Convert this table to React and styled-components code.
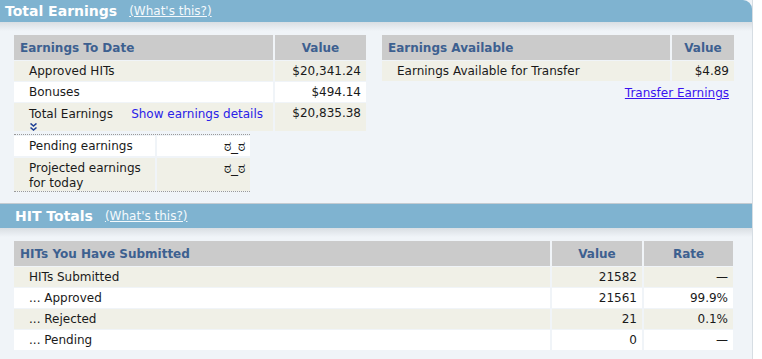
import React from 'react';
import styled, { createGlobalStyle } from 'styled-components';

const GlobalStyle = createGlobalStyle`
    html, body {
        margin: 0;
        padding: 0;
        background: #ffffff;
    }
    body {
        font-family: 'DejaVu Sans', Verdana, sans-serif;
        font-size: 12px;
        color: #1a1a1a;
    }
`;

const Page = styled.div`
    width: 752px;
    border-right: 1px solid #d6dde3;
    background: #f0f4f8;
`;

const Section = styled.section`
    border-top: ${(p) => (p.$divided ? '1px solid #c4cbd1' : 'none')};
`;

const Bar = styled.div`
    display: flex;
    align-items: center;
    gap: 12px;
    height: ${(p) => p.$height}px;
    padding-left: ${(p) => p.$indent}px;
    background: #7fb3d0;
    border-top-right-radius: ${(p) => (p.$rounded ? '9px' : '0')};
`;

const BarTitle = styled.h2`
    margin: 0;
    font-size: 14px;
    font-weight: bold;
    color: #ffffff;
`;

const BarLink = styled.a`
    color: #f4f9fc;
    font-size: 12px;
    text-decoration: underline;
    cursor: pointer;
`;

const Body = styled.div`
    padding: 13px 0 ${(p) => p.$bottom}px 14px;
    background: linear-gradient(#d9dee3 0px, #f0f4f8 9px);
`;

const Columns = styled.div`
    display: flex;
    gap: 16px;
    align-items: flex-start;
`;

const Stack = styled.div`
    display: flex;
    flex-direction: column;
    align-items: ${(p) => p.$align || 'stretch'};
`;

const Grid = styled.div`
    display: grid;
    grid-template-columns: ${(p) => p.$cols};
    column-gap: 2px;
    row-gap: ${(p) => p.$rowGap ?? 1}px;
`;

const HeadCell = styled.div`
    height: 25px;
    display: flex;
    align-items: center;
    justify-content: ${(p) => (p.$center ? 'center' : 'flex-start')};
    padding-left: ${(p) => (p.$center ? 0 : 6)}px;
    background: #cbcbcb;
    color: #3d6090;
    font-weight: bold;
`;

const Cell = styled.div`
    min-height: ${(p) => p.$height || 20}px;
    box-sizing: border-box;
    padding: ${(p) => (p.$top ? '3px' : '0')} 5px 0 15px;
    display: flex;
    align-items: ${(p) => (p.$top ? 'flex-start' : 'center')};
    justify-content: ${(p) => (p.$right ? 'flex-end' : 'flex-start')};
    background: ${(p) => (p.$alt ? '#f0f0e7' : '#ffffff')};
    line-height: 15px;
`;

const TotalCell = styled(Cell)`
    flex-direction: column;
    align-items: stretch;
    justify-content: flex-start;
    padding-top: 4px;
`;

const TotalLine = styled.div`
    display: flex;
    justify-content: space-between;
`;

const DetailsLink = styled.a`
    color: #2a22e8;
    cursor: pointer;
    padding-right: 5px;
`;

const Chevrons = styled.svg`
    width: 7px;
    height: 8px;
    margin: 1px 0 0 1px;
    display: block;
`;

const Dotted = styled(Grid)`
    margin-top: 3px;
    width: 236px;
    border-top: 1px dotted #9a9a9a;
    border-bottom: 1px dotted #9a9a9a;
    padding: 1px 0 0;
`;

const Face = styled.span`
    font-family: 'DejaVu Sans', 'Noto Sans', 'Noto Sans CJK JP', sans-serif;
    font-size: 14px;
    line-height: 15px;
`;

const TransferLink = styled.a`
    margin-top: 5px;
    padding-right: 5px;
    color: #3a12f0;
    text-decoration: underline;
    cursor: pointer;
`;

const earnings = [
    ['Approved HITs', '$20,341.24'],
    ['Bonuses', '$494.14'],
];

const hits = [
    ['HITs Submitted', '21582', '\u2014'],
    ['... Approved', '21561', '99.9%'],
    ['... Rejected', '21', '0.1%'],
    ['... Pending', '0', '\u2014'],
];

const App = () => {
    return (
        <>
            <GlobalStyle />
            <Page>
                <Section>
                    <Bar $height={22} $indent={5} $rounded>
                        <BarTitle>Total Earnings</BarTitle>
                        <BarLink>(What's this?)</BarLink>
                    </Bar>
                    <Body $bottom={11}>
                        <Columns>
                            <Stack>
                                <Grid $cols="259px 91px">
                                    <HeadCell>Earnings To Date</HeadCell>
                                    <HeadCell $center>Value</HeadCell>
                                    {earnings.map(([label, value], i) => (
                                        <React.Fragment key={label}>
                                            <Cell $alt={i % 2 === 0}>{label}</Cell>
                                            <Cell $alt={i % 2 === 0} $right>
                                                {value}
                                            </Cell>
                                        </React.Fragment>
                                    ))}
                                    <TotalCell $alt $height={26}>
                                        <TotalLine>
                                            <span>Total Earnings</span>
                                            <DetailsLink>Show earnings details</DetailsLink>
                                        </TotalLine>
                                        <Chevrons viewBox="0 0 7 8">
                                            <path
                                                d="M0.5 0.5 L3.5 3 L6.5 0.5 M0.5 4.5 L3.5 7 L6.5 4.5"
                                                fill="none"
                                                stroke="#1d3f96"
                                                strokeWidth="1.6"
                                            />
                                        </Chevrons>
                                    </TotalCell>
                                    <Cell $alt $right $top $height={26}>
                                        $20,835.38
                                    </Cell>
                                </Grid>
                                <Dotted $cols="141px 93px" $rowGap={2}>
                                    <Cell>Pending earnings</Cell>
                                    <Cell $right>
                                        <Face>ಠ_ಠ</Face>
                                    </Cell>
                                    <Cell $alt $top $height={33}>
                                        Projected earnings
                                        <br />
                                        for today
                                    </Cell>
                                    <Cell $alt $right $top $height={33}>
                                        <Face>ಠ_ಠ</Face>
                                    </Cell>
                                </Dotted>
                            </Stack>
                            <Stack $align="flex-end">
                                <Grid $cols="288px 62px">
                                    <HeadCell>Earnings Available</HeadCell>
                                    <HeadCell $center>Value</HeadCell>
                                    <Cell $alt>Earnings Available for Transfer</Cell>
                                    <Cell $alt $right>
                                        $4.89
                                    </Cell>
                                </Grid>
                                <TransferLink>Transfer Earnings</TransferLink>
                            </Stack>
                        </Columns>
                    </Body>
                </Section>
                <Section $divided>
                    <Bar $height={24} $indent={15}>
                        <BarTitle>HIT Totals</BarTitle>
                        <BarLink>(What's this?)</BarLink>
                    </Bar>
                    <Body $bottom={9}>
                        <Grid $cols="536px 90px 89px">
                            <HeadCell>HITs You Have Submitted</HeadCell>
                            <HeadCell $center>Value</HeadCell>
                            <HeadCell $center>Rate</HeadCell>
                            {hits.map(([label, value, rate], i) => (
                                <React.Fragment key={label}>
                                    <Cell $alt={i % 2 === 0}>{label}</Cell>
                                    <Cell $alt={i % 2 === 0} $right>
                                        {value}
                                    </Cell>
                                    <Cell $alt={i % 2 === 0} $right>
                                        {rate}
                                    </Cell>
                                </React.Fragment>
                            ))}
                        </Grid>
                    </Body>
                </Section>
            </Page>
        </>
    );
};

export default App;
